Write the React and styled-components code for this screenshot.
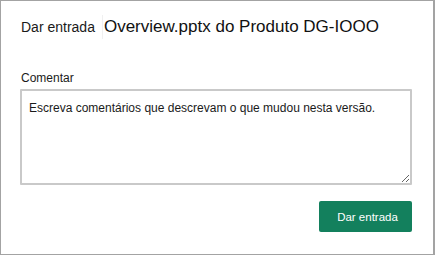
import React from 'react';
import styled, { createGlobalStyle } from 'styled-components';

const GlobalStyle = createGlobalStyle`
  html, body {
    margin: 0;
    padding: 0;
    background: #ffffff;
  }
  body {
    font-family: "Liberation Sans", Arial, sans-serif;
    color: #1f1f1f;
  }
`;

const Panel = styled.section`
  box-sizing: border-box;
  width: 435px;
  height: 255px;
  border: 1px solid #a3a3a3;
  border-right-width: 2px;
  padding: 14px 22px 0 19px;
  display: flex;
  flex-direction: column;
  background: #fff;
`;

const Header = styled.header`
  display: flex;
  align-items: baseline;
  gap: 7px;
  height: 24px;
  line-height: 24px;
  padding-left: 1px;
`;

const Action = styled.span`
  font-size: 14px;
  color: #1a1a1a;
`;

const FileName = styled.h1`
  margin: 0;
  font-size: 17px;
  font-weight: normal;
  color: #111;
  border-left: 1px solid #f0f0f0;
  padding-left: 1px;
`;

const Label = styled.label`
  display: block;
  margin-top: 31px;
  font-size: 12px;
  line-height: 16px;
  color: #1a1a1a;
  padding-left: 1px;
`;

const Comment = styled.textarea`
  box-sizing: border-box;
  margin-top: 3px;
  width: 392px;
  height: 96px;
  border: 2px solid #c9c9c9;
  border-radius: 1px;
  padding: 10px 7px;
  font-family: "Liberation Sans", Arial, sans-serif;
  font-size: 12px;
  line-height: 15px;
  color: #1a1a1a;
  resize: vertical;
  outline: none;
  &::placeholder {
    color: #1a1a1a;
    opacity: 1;
  }
`;

const Footer = styled.footer`
  display: flex;
  justify-content: flex-end;
  padding-top: 16px;
  width: 392px;
`;

const Submit = styled.button`
  width: 93px;
  height: 31px;
  border: none;
  border-radius: 2px;
  background: #13805d;
  color: #ffffff;
  font-family: "Liberation Sans", Arial, sans-serif;
  font-size: 11.5px;
  padding: 0 0 0 4px;
  cursor: pointer;
`;

export default function App() {
  return (
    <>
      <GlobalStyle />
      <Panel>
        <Header>
          <Action>Dar entrada</Action>
          <FileName>Overview.pptx do Produto DG-IOOO</FileName>
        </Header>
        <Label htmlFor="comment">Comentar</Label>
        <Comment
          id="comment"
          placeholder="Escreva comentários que descrevam o que mudou nesta versão."
        />
        <Footer>
          <Submit>Dar entrada</Submit>
        </Footer>
      </Panel>
    </>
  );
}
